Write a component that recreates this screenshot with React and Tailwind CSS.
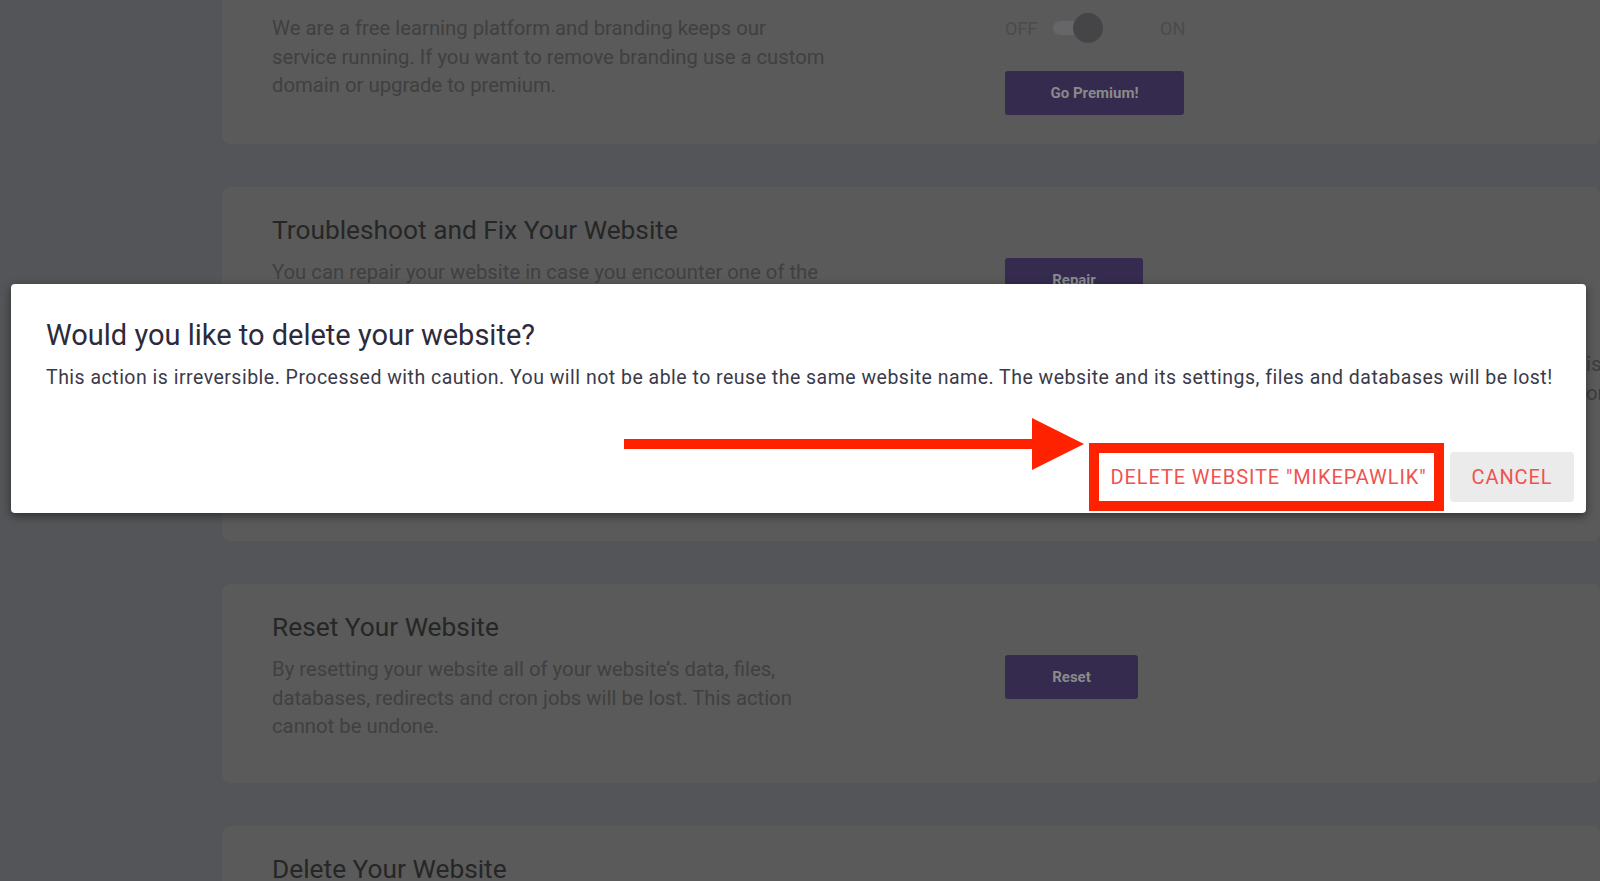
import React from "react";

const Toggle = () => (
  <div className="flex items-center h-[28px]">
    <span className="text-[18px] text-[#4b4b4b] w-[48px]">OFF</span>
    <div className="relative w-[50px] h-[28px] flex items-center">
      <div className="w-[40px] h-[14px] rounded-full bg-[#666668]" />
      <div className="absolute left-[20px] top-[-1px] w-[30px] h-[30px] rounded-full bg-[#454548]" />
    </div>
    <span className="ml-[57px] text-[18px] text-[#4b4b4b]">ON</span>
  </div>
);

const DarkButton = ({ children, className = "" }) => (
  <button
    className={
      "h-[44px] rounded-[3px] bg-[#352b4f] text-[15px] font-bold text-[#8a8a8a] " +
      className
    }
  >
    {children}
  </button>
);

const Card = ({ title, text, right, className = "", extra }) => (
  <div className={"rounded-[8px] bg-[#5a5a5a] pl-[50px] pt-[27px] " + className}>
    <h2 className="text-[26.3px] leading-[32px] text-[#262626]">{title}</h2>
    <div className="mt-[12px] flex">
      <p className="w-[733px] shrink-0 pr-[175px] text-[20.3px] leading-[28.5px] text-[#404040]">
        {text}
      </p>
      <div className="w-[581px] shrink-0">{right}</div>
      {extra}
    </div>
  </div>
);

export default function App() {
  return (
    <div className="relative h-[881px] overflow-hidden bg-[#545558] font-['Roboto','Liberation_Sans',sans-serif]">
      <div className="ml-[222px] -mt-[57px] flex flex-col gap-[43px]">
        <Card
          className="pb-[29px]"
          title="Remove Banner"
          text="We are a free learning platform and branding keeps our service running. If you want to remove branding use a custom domain or upgrade to premium."
          right={
            <div>
              <Toggle />
              <DarkButton className="mt-[29px] w-[179px]">Go Premium!</DarkButton>
            </div>
          }
        />
        <Card
          className="h-[354px]"
          title="Troubleshoot and Fix Your Website"
          text="You can repair your website in case you encounter one of the following issues: broken file permissions, missing default files or a misconfigured server setup."
          right={<DarkButton className="w-[138px]">Repair</DarkButton>}
          extra={
            <p className="mt-[92px] w-[300px] shrink-0 text-[20.3px] leading-[28.5px] text-[#3c3c3c]">
              is
              <br />
              or
            </p>
          }
        />
        <Card
          className="pb-[42px]"
          title="Reset Your Website"
          text="By resetting your website all of your website’s data, files, databases, redirects and cron jobs will be lost. This action cannot be undone."
          right={<DarkButton className="w-[133px]">Reset</DarkButton>}
        />
        <Card
          className="h-[200px]"
          title="Delete Your Website"
          text="Deleting your website is permanent and cannot be undone."
          right={null}
        />
      </div>

      <div className="absolute left-[11px] top-[284px] w-[1575px] rounded-[4px] bg-white pl-[35px] pr-[12px] pt-[35px] pb-[2px] shadow-[0_3px_10px_rgba(0,0,0,0.45)]">
        <h1 className="text-[29px] leading-[32px] text-[#2d2b3b]">
          Would you like to delete your website?
        </h1>
        <p className="mt-[13px] text-[19.5px] leading-[28px] tracking-[0.49px] text-[#3b3a49] whitespace-nowrap">
          This action is irreversible. Processed with caution. You will not be able to reuse the same
          website name. The website and its settings, files and databases will be lost!
        </p>
        <div className="mt-[26px] flex justify-end">
          <svg width="460" height="52" viewBox="0 0 460 52" className="mr-[5px] shrink-0">
            <rect x="0" y="21" width="410" height="10" fill="#ff2200" />
            <polygon points="408,0 460,26 408,52" fill="#ff2200" />
          </svg>
          <div className="mt-[25px] h-[68px] w-[355px] border-[10px] border-[#ff2200]">
            <button className="flex h-full w-full items-center justify-center bg-white pl-[4px] text-[20px] uppercase tracking-[0.9px] text-[#ef5350]">
              Delete website "mikepawlik"
            </button>
          </div>
          <button className="mt-[34px] ml-[6px] h-[50px] w-[124px] rounded-[4px] bg-[#ebebeb] text-[20px] uppercase tracking-[0.9px] text-[#ef5350]">
            Cancel
          </button>
        </div>
      </div>
    </div>
  );
}
